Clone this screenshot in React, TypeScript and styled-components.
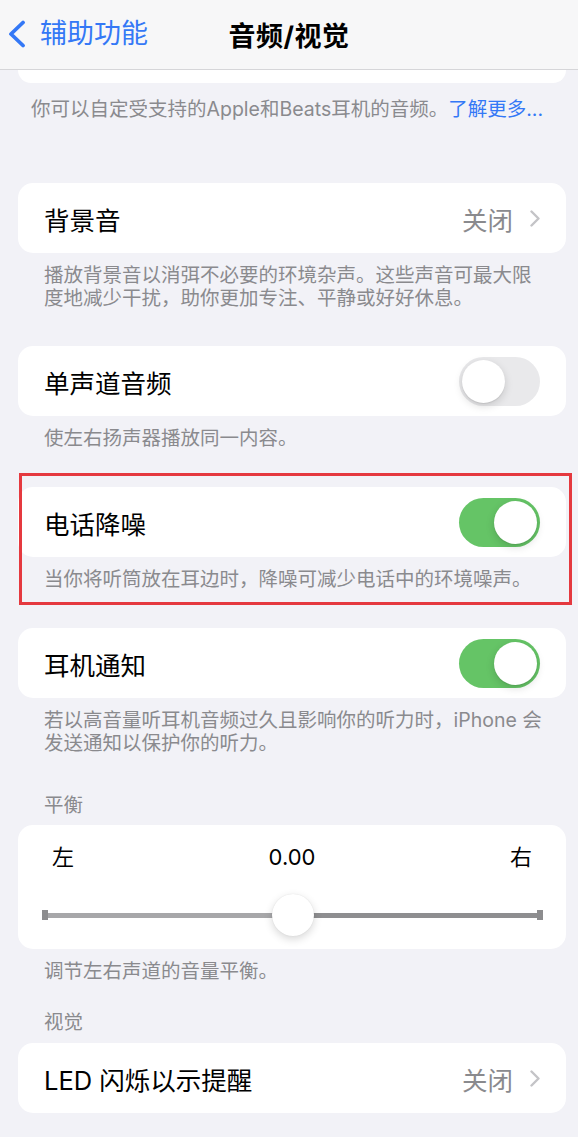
import React from "react";
import styled, { createGlobalStyle } from "styled-components";

const GlobalStyle = createGlobalStyle`
  html, body {
    margin: 0;
    padding: 0;
    background: #f2f2f7;
  }
  body {
    font-family: Inter, "Noto Sans CJK SC", "Noto Sans", sans-serif;
    -webkit-font-smoothing: antialiased;
  }
`;

const Screen = styled.div`
  width: 578px;
  min-height: 1137px;
  background: #f2f2f7;
  overflow: hidden;
`;

const NavBar = styled.header`
  height: 69px;
  background: #f7f7f8;
  border-bottom: 1px solid #d6d6d9;
  display: grid;
  grid-template-columns: 1fr auto 1fr;
  align-items: center;
`;

const BackButton = styled.div`
  display: flex;
  align-items: center;
  gap: 14px;
  padding-left: 8px;
  color: #3478f6;
  font-size: 27px;
  line-height: 1;
  margin-top: -2px;
`;

const NavTitle = styled.div`
  font-size: 27px;
  font-weight: 700;
  color: #000;
  letter-spacing: 0.5px;
`;

const Content = styled.main`
  padding: 0 12px 0 18px;
`;

const CardTail = styled.div`
  height: 13px;
  background: #fff;
  border-radius: 0 0 15px 15px;
`;

const Card = styled.section`
  background: #fff;
  border-radius: 15px;
`;

const Row = styled.div`
  height: 70px;
  padding: 0 26px;
  display: flex;
  align-items: center;
  justify-content: space-between;
`;

const RowTitle = styled.span`
  font-size: 25.5px;
  color: #000;
  white-space: nowrap;
`;

const RowValue = styled.span`
  display: flex;
  align-items: center;
  gap: 17px;
  font-size: 25.5px;
  color: #8a8a8e;
`;

const Footer = styled.p<{ $indent?: number; $before?: number; $after: number }>`
  margin: 0;
  padding: ${(p) => p.$before ?? 11}px 0 ${(p) => p.$after}px
    ${(p) => p.$indent ?? 26}px;
  font-size: 19.5px;
  line-height: 23px;
  color: #8a8a8e;
  white-space: nowrap;
`;

const Link = styled.span`
  color: #3478f6;
`;

const SectionHeader = styled.h3<{ $below: number }>`
  margin: 0;
  padding: 0 0 ${(p) => p.$below}px 26px;
  font-size: 19.5px;
  line-height: 23px;
  font-weight: 400;
  color: #8a8a8e;
`;

const Switch = styled.span<{ $on?: boolean }>`
  position: relative;
  flex-shrink: 0;
  width: 81px;
  height: 49px;
  border-radius: 25px;
  background: ${(p) => (p.$on ? "#65c466" : "#e9e9eb")};

  &::after {
    content: "";
    position: absolute;
    top: 3px;
    left: ${(p) => (p.$on ? "35px" : "3px")};
    width: 43px;
    height: 43px;
    border-radius: 50%;
    background: #fff;
    box-shadow: 0 3px 8px rgba(0, 0, 0, 0.15), 0 1px 1px rgba(0, 0, 0, 0.08);
  }
`;

const Highlighted = styled.div`
  position: relative;

  &::after {
    content: "";
    position: absolute;
    top: -14px;
    bottom: 23px;
    left: 1px;
    right: -6px;
    border: 3px solid #e5393f;
    pointer-events: none;
  }
`;

const BalanceCard = styled(Card)`
  padding: 20px 24px 13px 25px;
`;

const BalanceLabels = styled.div`
  display: flex;
  justify-content: space-between;
  align-items: center;
  padding: 0 10px 0 9px;
  font-size: 22px;
  line-height: 24px;
  color: #000;
`;

const SliderRow = styled.div`
  height: 42px;
  margin-top: 25px;
  display: flex;
  align-items: center;
`;

const Track = styled.div`
  position: relative;
  flex: 1;
  height: 5px;
  background: linear-gradient(to right, #a7a7a9 50%, #8e8e90 50%);

  &::before,
  &::after {
    content: "";
    position: absolute;
    top: -2.5px;
    width: 6px;
    height: 10px;
    background: #8c8c8e;
  }
  &::before {
    left: -1px;
  }
  &::after {
    right: -1px;
  }
`;

const Thumb = styled.span`
  position: absolute;
  top: 50%;
  width: 42px;
  height: 42px;
  margin: -21px 0 0 -21px;
  border-radius: 50%;
  background: #fff;
  box-shadow: 0 3px 8px rgba(0, 0, 0, 0.16), 0 0 1px rgba(0, 0, 0, 0.12);
`;

const BackChevron = () => (
  <svg width="18" height="28" viewBox="0 0 18 28" fill="none">
    <polyline
      points="15,2.5 3,14 15,25.5"
      stroke="#3478f6"
      strokeWidth="3.8"
      strokeLinecap="round"
      strokeLinejoin="round"
    />
  </svg>
);

const DisclosureChevron = () => (
  <svg width="10" height="17" viewBox="0 0 10 17" fill="none">
    <polyline
      points="1.5,1.5 8.5,8.5 1.5,15.5"
      stroke="#c4c4c7"
      strokeWidth="2.4"
      strokeLinecap="round"
      strokeLinejoin="round"
    />
  </svg>
);

export default function App() {
  const balance = 0;
  const thumbLeft = `${((balance + 1) / 2) * 100}%`;

  return (
    <>
      <GlobalStyle />
      <Screen>
        <NavBar>
          <BackButton>
            <BackChevron />
            <span>辅助功能</span>
          </BackButton>
          <NavTitle>音频/视觉</NavTitle>
          <div />
        </NavBar>

        <Content>
          <CardTail />
          <Footer $indent={13} $before={15} $after={62}>
            你可以自定受支持的Apple和Beats耳机的音频。<Link>了解更多...</Link>
          </Footer>

          <Card>
            <Row>
              <RowTitle>背景音</RowTitle>
              <RowValue>
                关闭
                <DisclosureChevron />
              </RowValue>
            </Row>
          </Card>
          <Footer $after={36}>
            播放背景音以消弭不必要的环境杂声。这些声音可最大限
            <br />
            度地减少干扰，助你更加专注、平静或好好休息。
          </Footer>

          <Card>
            <Row>
              <RowTitle>单声道音频</RowTitle>
              <Switch />
            </Row>
          </Card>
          <Footer $after={37}>使左右扬声器播放同一内容。</Footer>

          <Highlighted>
            <Card>
              <Row>
                <RowTitle>电话降噪</RowTitle>
                <Switch $on />
              </Row>
            </Card>
            <Footer $after={37}>当你将听筒放在耳边时，降噪可减少电话中的环境噪声。</Footer>
          </Highlighted>

          <Card>
            <Row>
              <RowTitle>耳机通知</RowTitle>
              <Switch $on />
            </Row>
          </Card>
          <Footer $after={39}>
            若以高音量听耳机音频过久且影响你的听力时，iPhone 会
            <br />
            发送通知以保护你的听力。
          </Footer>

          <SectionHeader $below={8}>平衡</SectionHeader>
          <BalanceCard>
            <BalanceLabels>
              <span>左</span>
              <span>0.00</span>
              <span>右</span>
            </BalanceLabels>
            <SliderRow>
              <Track>
                <Thumb style={{ left: thumbLeft }} />
              </Track>
            </SliderRow>
          </BalanceCard>
          <Footer $after={28}>调节左右声道的音量平衡。</Footer>

          <SectionHeader $below={9}>视觉</SectionHeader>
          <Card>
            <Row>
              <RowTitle>LED 闪烁以示提醒</RowTitle>
              <RowValue>
                关闭
                <DisclosureChevron />
              </RowValue>
            </Row>
          </Card>
        </Content>
      </Screen>
    </>
  );
}
